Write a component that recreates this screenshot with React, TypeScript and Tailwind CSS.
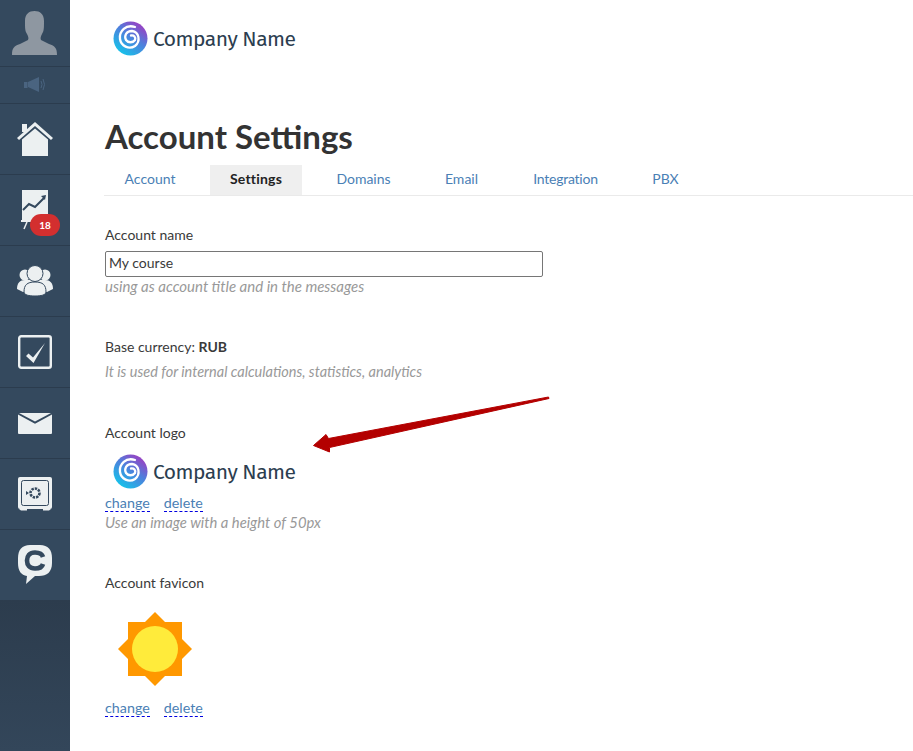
import React from "react";

const rowCls = "relative flex shrink-0 items-center justify-center border-b border-[#2b3c4e] bg-[#34495e]";

const Avatar = () => (
  <svg width="46" height="45" viewBox="0 0 46 45">
    <path
      fill="#8e97a1"
      d="M0 44 C0 37 2 35 8 33 L16 29 C17 27 16 25 15 23 C13 20 13 17 13 10 C13 3 17 0 22.5 0 C28 0 32 3 32 10 C32 17 32 20 30 23 C29 25 28 27 29 29 L37 33 C43 35 45 37 45 44 Z"
    />
  </svg>
);

const Speaker = () => (
  <svg width="22" height="16" viewBox="0 0 22 16" fill="#4a6480">
    <rect x="0" y="5" width="3.5" height="6" />
    <path d="M4 5 L15 0 V15 L4 10 Z" />
    <path d="M17 4 Q19 7.5 17 11 M19 2 Q22 7.5 19 13" fill="none" stroke="#4a6480" />
  </svg>
);

const HomeIcon = () => (
  <svg width="36" height="35" viewBox="0 0 36 35" fill="#ecf0f1">
    <rect x="5" y="2" width="5" height="8" />
    <path d="M0 16 L18 0 L36 16 L34 18 L18 4 L2 18 Z" />
    <path d="M5 17.5 L18 6.5 L31 17.5 V34 H5 Z" />
  </svg>
);

const ChartIcon = () => (
  <svg width="28" height="40" viewBox="0 0 28 40">
    <rect x="1" y="0" width="26" height="30" fill="#ecf0f1" />
    <path d="M2 20 L8 14 L14 17 L23 8" fill="none" stroke="#34495e" strokeWidth="2" />
    <path d="M20 6 L25 5 L24 10 Z" fill="#34495e" />
    <path d="M0 31 H16" stroke="#ecf0f1" strokeWidth="2" />
    <path d="M6 32 L3 39" stroke="#ecf0f1" strokeWidth="1.5" />
  </svg>
);

const PeopleIcon = () => (
  <svg width="36" height="32" viewBox="0 0 36 32" fill="#ecf0f1">
    <circle cx="8" cy="10" r="5.5" />
    <circle cx="28" cy="10" r="5.5" />
    <path d="M0 24 C0 18 3 15 8 15 H28 C33 15 36 18 36 24 L30 27 H6 Z" />
    <circle cx="18" cy="8.5" r="8" stroke="#34495e" strokeWidth="1" />
    <path
      d="M7 27 C7 20 10 17 18 17 C26 17 29 20 29 27 C29 30 24 31 18 31 C12 31 7 30 7 27 Z"
      stroke="#34495e"
      strokeWidth="1"
    />
  </svg>
);

const CheckIcon = () => (
  <svg width="34" height="34" viewBox="0 0 34 34">
    <rect x="1.2" y="1.2" width="31.6" height="31.6" rx="2" fill="none" stroke="#ecf0f1" strokeWidth="2.4" />
    <path d="M8 21 L10.5 18.5 L15 22.5 L27 8 L15.5 28 Z" fill="#ecf0f1" />
  </svg>
);

const MailIcon = () => (
  <svg width="34" height="21" viewBox="0 0 34 21" fill="#ecf0f1">
    <path d="M1 0 H33 L17 8.5 Z" />
    <path d="M0 1.5 L17 10.8 L34 1.5 V20 Q34 21 33 21 H1 Q0 21 0 20 Z" />
  </svg>
);

const SafeIcon = () => (
  <svg width="34" height="35" viewBox="0 0 34 35">
    <rect x="0" y="0" width="34" height="32" rx="2" fill="#ecf0f1" />
    <rect x="3.5" y="3.5" width="27" height="25" rx="2" fill="#ecf0f1" stroke="#34495e" />
    <circle cx="17" cy="16" r="4.5" fill="none" stroke="#34495e" strokeWidth="2.6" strokeDasharray="2.4 1" />
    <path d="M8 14 L11 16 L8 18 Z" fill="#34495e" />
    <path d="M1 32 H9 V33.5 H3 Z M33 32 H25 V33.5 H31 Z" fill="#ecf0f1" />
  </svg>
);

const ChatIcon = () => (
  <svg width="34" height="40" viewBox="0 0 34 40">
    <path
      fill="#ecf0f1"
      d="M12 0 H22 C30 0 34 5 34 13 V18 C34 27 29 31 21 31 H17 L8 39 L9 31 C3 30 0 26 0 18 V13 C0 5 4 0 12 0 Z"
    />
    <path
      d="M25 12 C24 8.5 21 7.5 17 7.5 C11.5 7.5 9 11 9 15.5 C9 20 11.5 23.5 17 23.5 C21 23.5 24 22.5 25 19"
      fill="none"
      stroke="#34495e"
      strokeWidth="4.6"
    />
  </svg>
);

const CompanyLogo = () => (
  <div className="ml-2 flex h-[34px] items-center gap-[5px]">
    <svg width="35" height="35" viewBox="0 0 35 35">
      <defs>
        <linearGradient id="spiral" x1="0.85" y1="0.05" x2="0.2" y2="0.95">
          <stop offset="0" stopColor="#a13ac0" />
          <stop offset="0.45" stopColor="#4f7fdc" />
          <stop offset="1" stopColor="#14c4ea" />
        </linearGradient>
      </defs>
      <circle cx="17.5" cy="17.5" r="17" fill="url(#spiral)" />
      <path
        d="M22 6 C13 3 6 10 7 18 C8 25 16 29 22 25 C28 20 26 11 19 10 C13 10 11 15 13 19 C15 22 20 22 22 19 C23 16 21 14 18 14.5"
        fill="none"
        stroke="#fff"
        strokeWidth="2.3"
        strokeLinecap="round"
      />
    </svg>
    <span className="pt-[4px] font-['Fira_Sans','Open_Sans',sans-serif] text-[21px] font-normal tracking-[-0.5px] text-[#2c3e50]">
      Company Name
    </span>
  </div>
);

const SunIcon = () => (
  <svg width="74" height="74" viewBox="0 0 74 74">
    <rect x="10" y="10" width="54" height="54" fill="#ff9800" />
    <path d="M37 0 L74 37 L37 74 L0 37 Z" fill="#ff9800" />
    <circle cx="37" cy="37" r="23" fill="#ffeb3b" />
  </svg>
);

const hintCls = "leading-[18px] text-[#999] italic";

const FileLinks = () => (
  <div className="flex gap-[14px] text-[14.3px] leading-[16px] text-[#4a80b5]">
    <a className="border-b border-dashed border-[#0000e0]">change</a>
    <a className="border-b border-dashed border-[#0000e0]">delete</a>
  </div>
);

const tabs = [
  { label: "Account", cls: "w-[90px]" },
  { label: "Settings", cls: "w-[92px] bg-[#efefef] font-bold text-[#222] tracking-[0.2px]" },
  { label: "Domains", cls: "w-[93px]" },
  { label: "Email", cls: "w-[73px]" },
  { label: "Integration", cls: "w-[105px] tracking-[-0.25px]" },
  { label: "PBX", cls: "w-[65px]" },
];

export default function App() {
  return (
    <div className="relative flex h-[751px] w-[913px] overflow-hidden bg-white font-['Lato',sans-serif] text-[14px] text-[#3a3a3a]">
      <aside className="flex w-[70px] shrink-0 flex-col">
        <div className={`${rowCls} h-[67px]`}>
          <Avatar />
        </div>
        <div className={`${rowCls} h-[37px]`}>
          <Speaker />
        </div>
        <div className={`${rowCls} h-[71px]`}>
          <HomeIcon />
        </div>
        <div className={`${rowCls} h-[71px]`}>
          <ChartIcon />
          <span className="absolute top-[39px] left-[30px] flex h-[22px] w-[30px] items-center justify-center rounded-full bg-[#d32f2f] text-[10px] font-bold text-white">
            18
          </span>
        </div>
        <div className={`${rowCls} h-[71px]`}>
          <PeopleIcon />
        </div>
        <div className={`${rowCls} h-[71px]`}>
          <CheckIcon />
        </div>
        <div className={`${rowCls} h-[71px]`}>
          <MailIcon />
        </div>
        <div className={`${rowCls} h-[71px]`}>
          <SafeIcon />
        </div>
        <div className={`${rowCls} h-[70px] border-b-0`}>
          <ChatIcon />
        </div>
        <div className="flex-1 bg-gradient-to-b from-[#2c3c4d] to-[#33465a]" />
      </aside>

      <main className="flex-1 pt-[21px]">
        <div className="pl-[35px]">
          <CompanyLogo />
        </div>
        <h1 className="mt-[61px] pl-[35px] text-[33px] leading-[40px] font-bold text-[#333]">Account Settings</h1>
        <nav className="mt-[9px] ml-[34px] flex h-[31px] gap-[15px] border-b border-[#eaeaea] pl-px text-[14px] text-[#4a80b5]">
          {tabs.map((tab) => (
            <span key={tab.label} className={`flex h-[30px] items-center justify-center pb-[4px] ${tab.cls}`}>
              {tab.label}
            </span>
          ))}
        </nav>

        <section className="mt-[30px] pl-[35px]">
          <p className="leading-[18px]">Account name</p>
          <input
            readOnly
            value="My course"
            className="mt-[7px] block h-[26px] w-[438px] rounded-[2px] border border-[#767676] px-[3px] pb-[3px] text-[14px] text-[#3a3a3a]"
          />
          <p className={`${hintCls} text-[15px]`}>using as account title and in the messages</p>
        </section>

        <section className="mt-[43px] pl-[35px]">
          <p className="leading-[18px]">
            Base currency: <b>RUB</b>
          </p>
          <p className={`${hintCls} mt-[7px] text-[14.5px]`}>It is used for internal calculations, statistics, analytics</p>
        </section>

        <section className="mt-[43px] pl-[35px]">
          <p className="leading-[18px]">Account logo</p>
          <div className="mt-[12px]">
            <CompanyLogo />
          </div>
          <div className="mt-[7px] mb-[1px]">
            <FileLinks />
          </div>
          <p className={`${hintCls} text-[14.8px]`}>Use an image with a height of 50px</p>
        </section>

        <section className="mt-[43px] pl-[35px]">
          <p className="leading-[18px]">Account favicon</p>
          <div className="mt-[20px] ml-[13px]">
            <SunIcon />
          </div>
          <div className="mt-[14px]">
            <FileLinks />
          </div>
        </section>
      </main>

      {/* annotation arrow over the page */}
      <svg className="absolute top-[390px] left-[305px]" width="250" height="70" viewBox="305 390 250 70">
        <path
          fill="#b30000"
          stroke="#b30000"
          strokeWidth="1"
          strokeLinejoin="round"
          d="M313.5 445.5 L326 434.5 L328.5 438.5 L548.5 397 L549 398.5 L329.5 447.5 L329.5 452 Z"
        />
      </svg>
    </div>
  );
}
